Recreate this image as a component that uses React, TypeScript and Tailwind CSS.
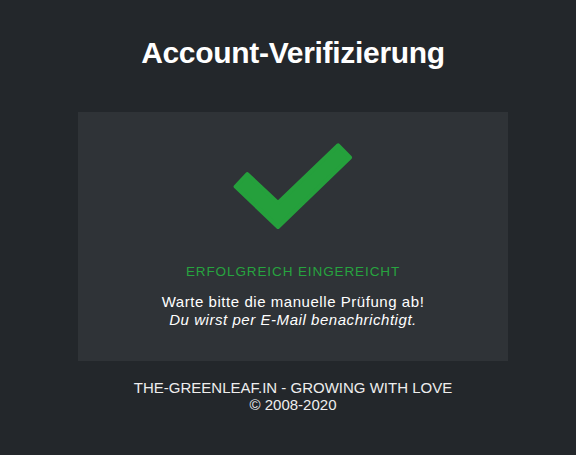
import React from "react";

const CheckMark: React.FC = () => (
    <svg width="130" height="100" viewBox="228 138 130 100" className="block">
        <polygon
            points="235.6,186.6 247.3,174.2 278,203 338.2,145.3 350,157.5 278,227"
            fill="#25a03c"
            stroke="#25a03c"
            strokeWidth="4"
            strokeLinejoin="round"
        />
    </svg>
);

const App: React.FC = () => {
    return (
        <div
            className="min-h-[455px] w-full bg-[#23272b] pl-[10px] text-white"
            style={{ fontFamily: '"Liberation Sans", Arial, sans-serif' }}
        >
            <div className="flex flex-col items-center">
                <h1 className="pt-[36px] text-[30px] font-bold leading-[34px] tracking-[-0.3px]">
                    Account-Verifizierung
                </h1>

                <div className="mt-[42px] flex h-[249px] w-[430px] flex-col items-center bg-[#2f3337] pt-[4px]">
                    <div className="mt-[22px]">
                        <CheckMark />
                    </div>
                    <p className="mt-[26px] text-[13.5px] leading-[16px] tracking-[0.9px] text-[#27a43f]">
                        ERFOLGREICH EINGEREICHT
                    </p>
                    <div className="mt-[13px] text-center text-[15px] leading-[18px] tracking-[0.55px]">
                        <p>Warte bitte die manuelle Prüfung ab!</p>
                        <p className="italic">Du wirst per E-Mail benachrichtigt.</p>
                    </div>
                </div>

                <div className="mt-[18px] text-center text-[15px] leading-[17px] text-[#eeeeee]">
                    <p>THE-GREENLEAF.IN - GROWING WITH LOVE</p>
                    <p>© 2008-2020</p>
                </div>
            </div>
        </div>
    );
};

export default App;
